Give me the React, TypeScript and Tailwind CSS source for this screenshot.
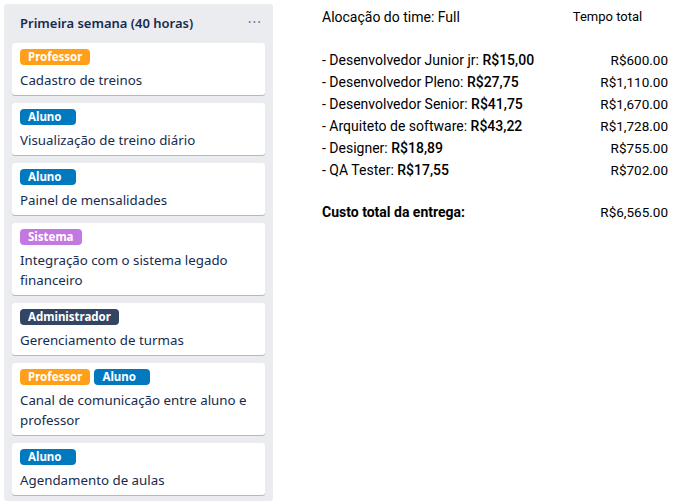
import React from 'react';

type Label = { name: string; color: string };

const PROFESSOR: Label = { name: 'Professor', color: 'bg-[#ff9f1a]' };
const ALUNO: Label = { name: 'Aluno', color: 'bg-[#0079bf]' };
const SISTEMA: Label = { name: 'Sistema', color: 'bg-[#c377e0]' };
const ADMIN: Label = { name: 'Administrador', color: 'bg-[#344563]' };

const cards: { labels: Label[]; title: string }[] = [
  { labels: [PROFESSOR], title: 'Cadastro de treinos' },
  { labels: [ALUNO], title: 'Visualização de treino diário' },
  { labels: [ALUNO], title: 'Painel de mensalidades' },
  { labels: [SISTEMA], title: 'Integração com o sistema legado financeiro' },
  { labels: [ADMIN], title: 'Gerenciamento de turmas' },
  { labels: [PROFESSOR, ALUNO], title: 'Canal de comunicação entre aluno e professor' },
  { labels: [ALUNO], title: 'Agendamento de aulas' },
];

const roles = [
  { role: 'Desenvolvedor Junior jr', rate: 'R$15,00', total: 'R$600.00' },
  { role: 'Desenvolvedor Pleno', rate: 'R$27,75', total: 'R$1,110.00' },
  { role: 'Desenvolvedor Senior', rate: 'R$41,75', total: 'R$1,670.00' },
  { role: 'Arquiteto de software', rate: 'R$43,22', total: 'R$1,728.00' },
  { role: 'Designer', rate: 'R$18,89', total: 'R$755.00' },
  { role: 'QA Tester', rate: 'R$17,55', total: 'R$702.00' },
];

function Card({ labels, title }: { labels: Label[]; title: string }) {
  return (
    <div className="bg-white rounded-[3px] shadow-[0_1px_0_rgba(9,30,66,0.25)] px-2 pt-1.5 pb-[5px]">
      <div className="flex gap-1">
        {labels.map((l) => (
          <span
            key={l.name}
            className={`${l.color} h-4 min-w-[56px] rounded-[4px] px-2 text-[11.5px] font-bold leading-4 text-white`}
          >
            {l.name}
          </span>
        ))}
      </div>
      <p className="mt-[5px] text-[13.3px] leading-5 text-[#172b4d]">{title}</p>
    </div>
  );
}

export default function App() {
  return (
    <div className="flex items-start bg-white w-[683px] h-[502px] pl-1 pt-1 font-['Noto_Sans',sans-serif]">
      {/* lista estilo trello */}
      <div className="w-[269px] bg-[#ebecf0] rounded-[3px] px-2 pb-[6px]">
        <div className="flex items-center justify-between h-[39px] pl-2 pr-[3px]">
          <h2 className="text-[13px] font-semibold text-[#172b4d]">Primeira semana (40 horas)</h2>
          <span className="text-[#6b778c] text-[14px] leading-none tracking-[1px] -mt-1">···</span>
        </div>
        <div className="flex flex-col gap-2">
          {cards.map((c) => (
            <Card key={c.title} labels={c.labels} title={c.title} />
          ))}
        </div>
      </div>

      {/* custos */}
      <div className="ml-[49px] pt-[2px] font-['Roboto',sans-serif] text-[14px] text-black">
        <div className="grid grid-cols-[225px_121px] leading-[22px]">
          <div>Alocação do time: Full</div>
          <div className="text-center text-[13px]">Tempo total</div>
          <div className="col-span-2 h-[21px]" />
          {roles.map((r) => (
            <React.Fragment key={r.role}>
              <div className="whitespace-nowrap">
                - {r.role}: <span className="font-medium">{r.rate}</span>
              </div>
              <div className="text-right text-[13.5px]">{r.total}</div>
            </React.Fragment>
          ))}
          <div className="col-span-2 h-[20px]" />
          <div className="font-bold">Custo total da entrega:</div>
          <div className="text-right text-[13.5px]">R$6,565.00</div>
        </div>
      </div>
    </div>
  );
}
